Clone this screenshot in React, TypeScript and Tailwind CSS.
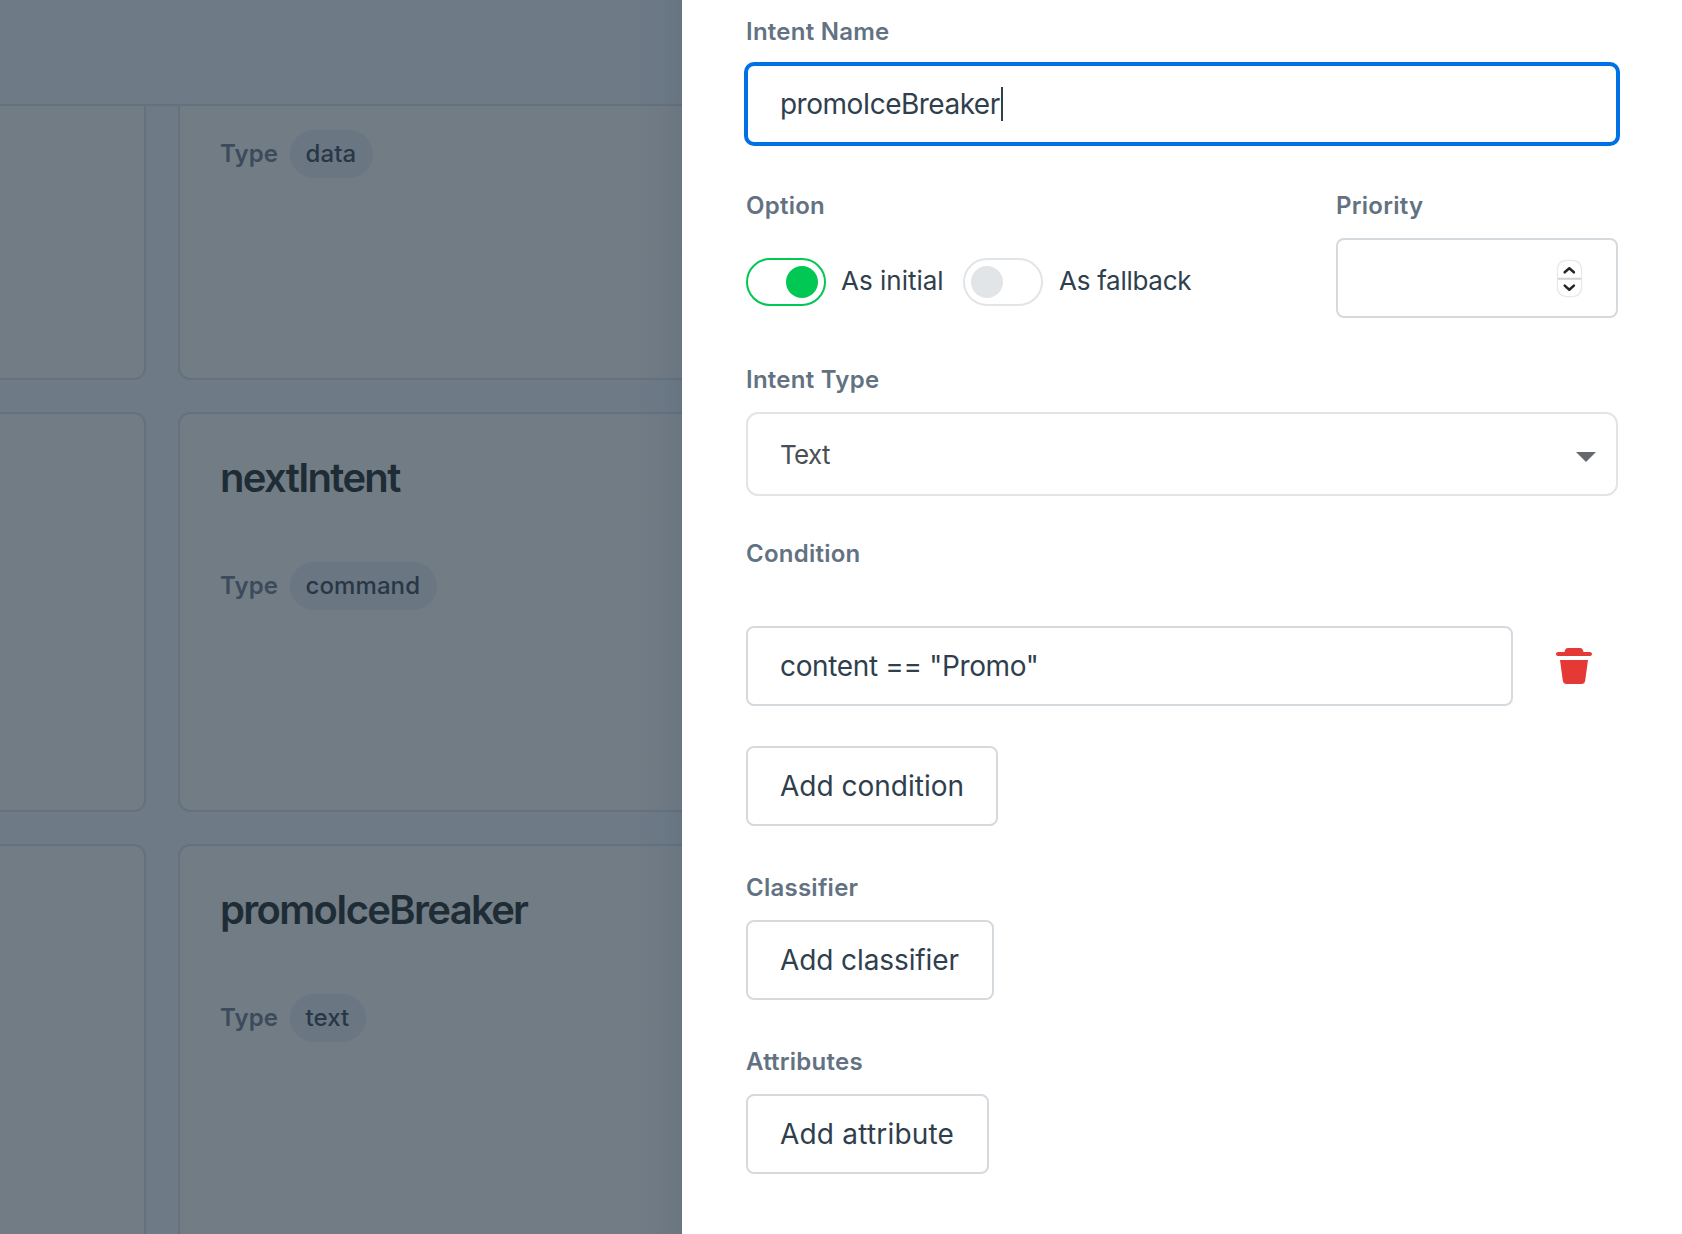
import type { ReactNode } from "react";

function Card({ title, type }: { title?: string; type?: string }) {
  return (
    <article className="flex h-[400px] flex-col rounded-xl border-2 border-[#65717d] bg-[#727c85] px-10 pt-10">
      <h2 className="h-12 text-[40px] leading-[48px] font-semibold tracking-[-1.68px] whitespace-nowrap text-[#1e2c35]">{title}</h2>
      {type && (
        <div className="mt-[60px] flex h-12 items-center text-2xl">
          <span className="w-[70px] font-semibold tracking-[0.1px] text-[#3c4b5b]">Type</span>
          <span className="flex h-12 items-center rounded-full bg-[#6a7681] pr-[16.5px] pl-[15.5px] font-medium tracking-[0.1px] text-[#283747]">{type}</span>
        </div>
      )}
    </article>
  );
}

function Label({ children }: { children: ReactNode }) {
  return <div className="h-8 text-2xl leading-8 font-semibold tracking-[0.25px] whitespace-nowrap text-[#637282]">{children}</div>;
}

function AddButton({ className, children }: { className: string; children: ReactNode }) {
  return (
    <button className={`flex h-20 items-center self-start rounded-lg border-2 border-[#d5dade] pl-8 text-[28px] whitespace-nowrap text-[#2f3f4e] ${className}`}>
      {children}
    </button>
  );
}

function Toggle({ on = false }: { on?: boolean }) {
  return (
    <span
      className={
        on
          ? "flex h-12 w-20 shrink-0 items-center justify-end rounded-full border-2 border-[#00c853] px-1.5"
          : "flex h-12 w-20 shrink-0 items-center rounded-full border-2 border-[#e1e5e8] px-1.5"
      }
    >
      <span className={on ? "size-8 rounded-full bg-[#00c853]" : "size-8 rounded-full bg-[#e1e5e8]"} />
    </span>
  );
}

function Stepper() {
  return (
    <span className="mt-px flex h-[35px] w-[23px] flex-col overflow-hidden rounded-lg shadow-[0_0_2px_0px_rgba(0,0,0,0.35)]">
      <svg viewBox="0 0 23 35" className="h-[35px] w-[23px]" fill="none">
        <path d="M0 17.7h23" stroke="#d2d2d2" strokeWidth="2" />
        <path d="M6.700 11.300l4.600-4.100 4.600 4.100M6.700 24.600l4.600 4.100 4.600-4.100" stroke="#252525" strokeWidth="2.5" strokeLinecap="round" strokeLinejoin="round" />
      </svg>
    </span>
  );
}

export default function App() {
  return (
    <div className="flex h-[1234px] w-[1682px] overflow-hidden bg-[#6e7a86] font-['Inter',sans-serif]">
      <div className="relative flex h-full w-[682px] shrink-0 flex-col overflow-hidden">
        <header className="h-[106px] shrink-0 border-b-2 border-[#65717d]" />
        <main className="min-h-0 flex-1 overflow-hidden">
          <div className="-mt-[126px] -ml-[486px] grid w-[1296px] grid-cols-2 gap-8">
            <Card />
            <Card type="data" />
            <Card />
            <Card title="nextIntent" type="command" />
            <Card />
            <Card title="promoIceBreaker" type="text" />
          </div>
        </main>
        <div className="absolute inset-y-0 right-0 w-12 bg-linear-to-r from-[#45586e]/0 via-[#45586e]/7 to-[#45586e]/18" />
      </div>

      <aside className="flex h-full flex-1 flex-col bg-white pt-4 pr-16 pl-16 text-[#2f3f4e]">
        <Label>Intent Name</Label>
        <div className="-mx-0.5 mt-3.5 flex h-[84px] shrink-0 items-center rounded-[10px] border-4 border-[#0070e6] pl-8 text-[28px]">
          <span className="tracking-[-0.52px]">promoIceBreaker</span>
          <span className="ml-px h-[34px] w-0.5 bg-[#2f3f4e]" />
        </div>

        <div className="mt-11 flex h-32 shrink-0 justify-between">
          <div>
            <Label>Option</Label>
            <div className="mt-9 flex h-12 items-center text-[26px] whitespace-nowrap">
              <Toggle on />
              <span className="mb-[3px] ml-[15px] w-[122px]">As initial</span>
              <Toggle />
              <span className="mb-[3px] ml-4 tracking-[-0.28px]">As fallback</span>
            </div>
          </div>
          <div className="w-[282px]">
            <Label>Priority</Label>
            <div className="mt-4 flex h-20 items-center justify-end rounded-lg border-2 border-[#d5dade] pr-[35px]">
              <Stepper />
            </div>
          </div>
        </div>

        <div className="mt-[46px] shrink-0">
          <Label>Intent Type</Label>
          <div className="mt-4 flex h-[84px] items-center justify-between rounded-xl border-2 border-[#e1e5e8] pr-5 pl-8 text-[26px] tracking-[-0.7px] text-[#4b4f53]">
            <span>Text</span>
            <svg viewBox="0 0 20 10" className="mt-1.5 h-2.5 w-5" fill="#65696d">
              <path d="M0 0h20L10 10z" />
            </svg>
          </div>
        </div>

        <div className="mt-[42px] flex shrink-0 flex-col">
          <Label>Condition</Label>
          <div className="mt-14 flex items-center">
            <div className="flex h-20 w-[767px] items-center rounded-lg border-2 border-[#d5dade] pl-8 text-[28px] tracking-[-0.35px] whitespace-pre">
              content == "Promo"
            </div>
            <svg viewBox="0 0 36 36" className="ml-[43px] size-9" fill="#e53935">
              <path d="M8.500 4C9 1.400 10 0 12 0h12c2 0 3 1.400 3.500 4H34c2.600 0 2.600 4 0 4H2C-.6 8-.6 4 2 4z" />
              <path d="M4 12h28l-2.800 20.500C28.900 35 27.500 36 25.500 36h-15C8.500 36 7.100 35 6.800 32.500z" />
            </svg>
          </div>
          <div className="mt-10 flex">
            <AddButton className="w-[252px]">Add condition</AddButton>
          </div>
        </div>

        <div className="mt-[46px] flex shrink-0 flex-col gap-4">
          <Label>Classifier</Label>
          <AddButton className="w-[248px] tracking-[-0.1px]">Add classifier</AddButton>
        </div>
        <div className="mt-[46px] flex shrink-0 flex-col gap-4">
          <Label>Attributes</Label>
          <AddButton className="w-[243px] tracking-[0.2px]">Add attribute</AddButton>
        </div>
      </aside>
    </div>
  );
}
